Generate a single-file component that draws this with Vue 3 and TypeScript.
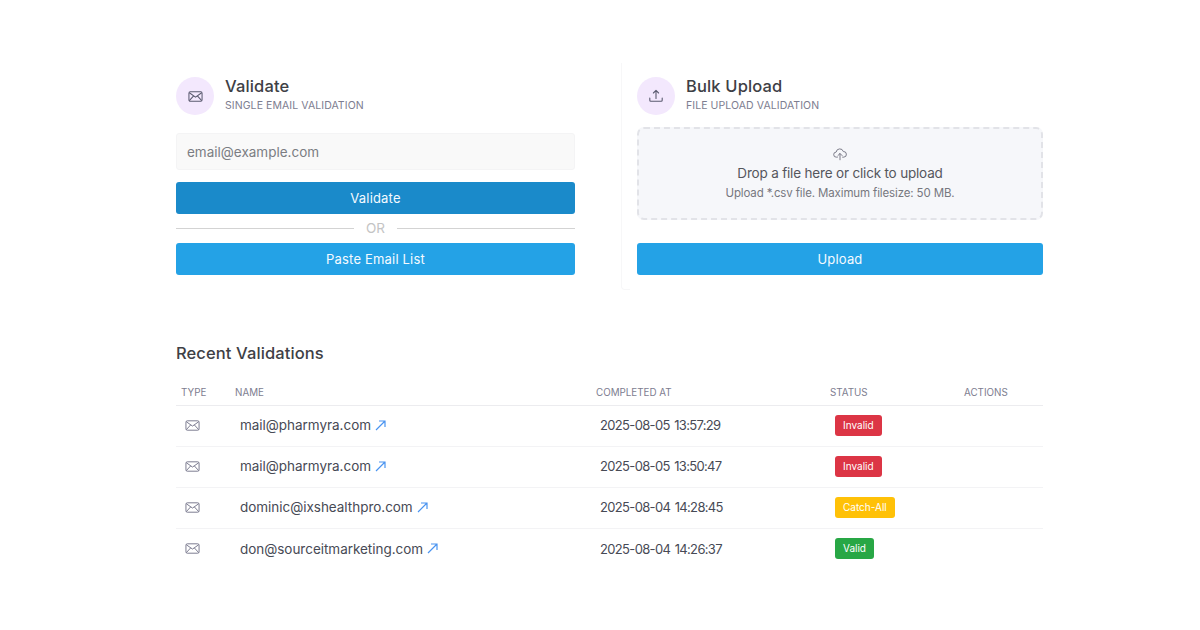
<script setup lang="ts">
interface Row {
  name: string;
  completed: string;
  status: string;
  tone: string;
}

const rows: Row[] = [
  { name: "mail@pharmyra.com", completed: "2025-08-05 13:57:29", status: "Invalid", tone: "red" },
  { name: "mail@pharmyra.com", completed: "2025-08-05 13:50:47", status: "Invalid", tone: "red" },
  { name: "dominic@ixshealthpro.com", completed: "2025-08-04 14:28:45", status: "Catch-All", tone: "amber" },
  { name: "don@sourceitmarketing.com", completed: "2025-08-04 14:26:37", status: "Valid", tone: "green" },
];
</script>

<template>
  <main class="page">
    <section class="cards">
      <div class="card">
        <header class="head">
          <span class="circle">
            <svg width="15" height="15" viewBox="0 0 16 16" fill="none" stroke="#5b5b70" stroke-width="1.1">
              <rect x="1" y="3" width="14" height="10" rx="1.4" />
              <path d="M1.4 4 8 8.6 14.6 4M1.4 12.4 6 7.4M14.6 12.4 10 7.4" />
            </svg>
          </span>
          <div>
            <h2 class="title">Validate</h2>
            <p class="sub">SINGLE EMAIL VALIDATION</p>
          </div>
        </header>
        <input class="field" type="text" placeholder="email@example.com" />
        <button class="btn dark" type="button">Validate</button>
        <div class="or"><span>OR</span></div>
        <button class="btn" type="button">Paste Email List</button>
      </div>

      <div class="card outlined">
        <header class="head tight">
          <span class="circle">
            <svg width="16" height="16" viewBox="0 0 16 16" fill="none" stroke="#5b5b70" stroke-width="1.1" stroke-linecap="round" stroke-linejoin="round">
              <path d="M8 10.5V2.5M5.4 5 8 2.4 10.6 5M1.8 10v2.2a1 1 0 0 0 1 1h10.4a1 1 0 0 0 1-1V10" />
            </svg>
          </span>
          <div>
            <h2 class="title">Bulk Upload</h2>
            <p class="sub">FILE UPLOAD VALIDATION</p>
          </div>
        </header>
        <div class="drop">
          <svg width="14" height="14" viewBox="0 0 16 16" fill="none" stroke="#6b6b7a" stroke-width="1" stroke-linecap="round" stroke-linejoin="round">
            <path d="M5 11.6H3.8A2.9 2.9 0 0 1 3.6 5.8 4.2 4.2 0 0 1 11.8 5.2 3.2 3.2 0 0 1 12.4 11.6H11" />
            <path d="M8 14.6V7.6M5.6 9.8 8 7.4l2.4 2.4" />
          </svg>
          <p class="drop-main">Drop a file here or click to upload</p>
          <p class="drop-note">Upload *.csv file. Maximum filesize: 50 MB.</p>
        </div>
        <button class="btn" type="button">Upload</button>
      </div>
    </section>

    <section class="recent">
      <h3 class="recent-title">Recent Validations</h3>
      <div class="row heading">
        <span>TYPE</span>
        <span>NAME</span>
        <span>COMPLETED AT</span>
        <span>STATUS</span>
        <span>ACTIONS</span>
      </div>
      <div v-for="(row, i) in rows" :key="i" class="row">
        <span class="type-cell">
          <svg width="15" height="15" viewBox="0 0 16 16" fill="none" stroke="#74748a" stroke-width="1">
            <rect x="1" y="3" width="14" height="10" rx="1.4" />
            <path d="M1.4 4 8 8.6 14.6 4M1.4 12.4 6 7.4M14.6 12.4 10 7.4" />
          </svg>
        </span>
        <span class="name-cell">
          {{ row.name }}
          <svg class="arrow" width="11" height="11" viewBox="0 0 11 11" fill="none" stroke="#4a94f0" stroke-width="1.2">
            <path d="M1 10 10 1M4 1h6v6" />
          </svg>
        </span>
        <span class="date-cell">{{ row.completed }}</span>
        <span class="status-cell"><span class="badge" :class="row.tone">{{ row.status }}</span></span>
        <span></span>
      </div>
    </section>
  </main>
</template>

<style scoped>
.page {
  width: 867px;
  margin-left: 176px;
  padding-top: 77px;
  box-sizing: border-box;
  font-family: Inter, "Noto Sans", sans-serif;
  color: #3d4048;
}
.cards {
  display: grid;
  grid-template-columns: 399px 406px;
  column-gap: 62px;
}
.card {
  display: flex;
  flex-direction: column;
}
.card.outlined {
  position: relative;
}
.card.outlined::before {
  content: "";
  position: absolute;
  left: -16px;
  top: -14px;
  bottom: -15px;
  width: 8px;
  border-left: 1px solid #f7f7f8;
  border-bottom: 1px solid #f7f7f8;
  border-bottom-left-radius: 4px;
}
.head {
  display: flex;
  gap: 11px;
  height: 56px;
}
.head.tight {
  height: 50px;
}
.circle {
  width: 38px;
  height: 38px;
  flex: none;
  border-radius: 50%;
  background: #f3e8fd;
  display: flex;
  align-items: center;
  justify-content: center;
}
.title {
  margin: -1px 0 0;
  font-size: 16.5px;
  line-height: 20px;
  font-weight: 500;
  letter-spacing: 0.15px;
  color: #3e4045;
}
.sub {
  margin: 2px 0 0;
  font-size: 10.5px;
  line-height: 16px;
  letter-spacing: 0.08px;
  color: #7d7d90;
}
.field {
  height: 37px;
  box-sizing: border-box;
  padding: 0 10px;
  border: 1px solid #f4f4f5;
  border-radius: 3px;
  background: #f9f9f9;
  font: 13.5px Inter, "Noto Sans", sans-serif;
  outline: none;
}
.field::placeholder {
  color: #7b7d83;
  opacity: 1;
}
.btn {
  display: block;
  width: 100%;
  height: 32px;
  border: 0;
  border-radius: 3px;
  background: #24a2e6;
  color: #f4faff;
  font: 13px Inter, "Noto Sans", sans-serif;
  letter-spacing: 0.18px;
}
.btn.dark {
  margin-top: 12px;
  background: #1a8aca;
}
.or {
  height: 29px;
  box-sizing: border-box;
  padding-bottom: 1px;
  display: flex;
  align-items: center;
  gap: 12px;
  color: #c4c4c4;
  font-size: 13.5px;
}
.or::before,
.or::after {
  content: "";
  flex: 1;
  height: 1px;
  background: #d3d3d3;
}
.drop {
  height: 93px;
  box-sizing: border-box;
  margin-bottom: 23px;
  padding-top: 18px;
  border: 2px dashed #e2e3e8;
  border-radius: 7px;
  background: #f6f7fa;
  display: flex;
  flex-direction: column;
  align-items: center;
}
.drop-main {
  margin: 3px 0 0;
  font-size: 13.5px;
  line-height: 18px;
  letter-spacing: -0.18px;
  color: #55565d;
}
.drop-note {
  margin: 3px 0 0;
  font-size: 11.5px;
  line-height: 16px;
  letter-spacing: -0.13px;
  color: #77787f;
}
.recent {
  margin-top: 67px;
}
.recent-title {
  margin: 0;
  font-size: 16.5px;
  line-height: 22px;
  font-weight: 500;
  letter-spacing: 0.1px;
  color: #3e4045;
}
.row {
  display: grid;
  grid-template-columns: 54px 366px 234px 134px 79px;
  align-items: center;
  height: 41px;
  padding-bottom: 2px;
  border-bottom: 1px solid #f3f3f5;
  box-sizing: border-box;
  font-size: 13.5px;
  letter-spacing: -0.03px;
}
.row:last-child {
  border-bottom: 0;
}
.row.heading {
  height: 27px;
  margin-top: 15px;
  padding-bottom: 0;
  border-bottom: 1px solid #ececef;
  font-size: 9.8px;
  letter-spacing: 0;
  color: #7d7d90;
  align-items: start;
  padding-top: 6px;
  line-height: 16px;
}
.row.heading > :first-child,
.row.heading > :nth-child(2) {
  padding-left: 5px;
}
.type-cell {
  display: flex;
  padding-left: 8.5px;
}
.name-cell {
  padding-left: 10px;
  display: flex;
  align-items: center;
  gap: 4px;
  white-space: nowrap;
  color: #474a55;
}
.date-cell {
  padding-left: 4px;
  font-size: 13px;
  letter-spacing: -0.66px;
  word-spacing: 1.5px;
  color: #474a55;
}
.status-cell {
  padding-left: 5px;
  letter-spacing: 0;
}
.badge {
  display: inline-block;
  padding: 0 8px;
  height: 21px;
  line-height: 21px;
  border-radius: 3px;
  color: #fff;
  font-size: 10px;
  font-weight: 400;
  vertical-align: middle;
}
.red { background: #dc3545; }
.amber { background: #ffc107; }
.green { background: #28a745; }
</style>
